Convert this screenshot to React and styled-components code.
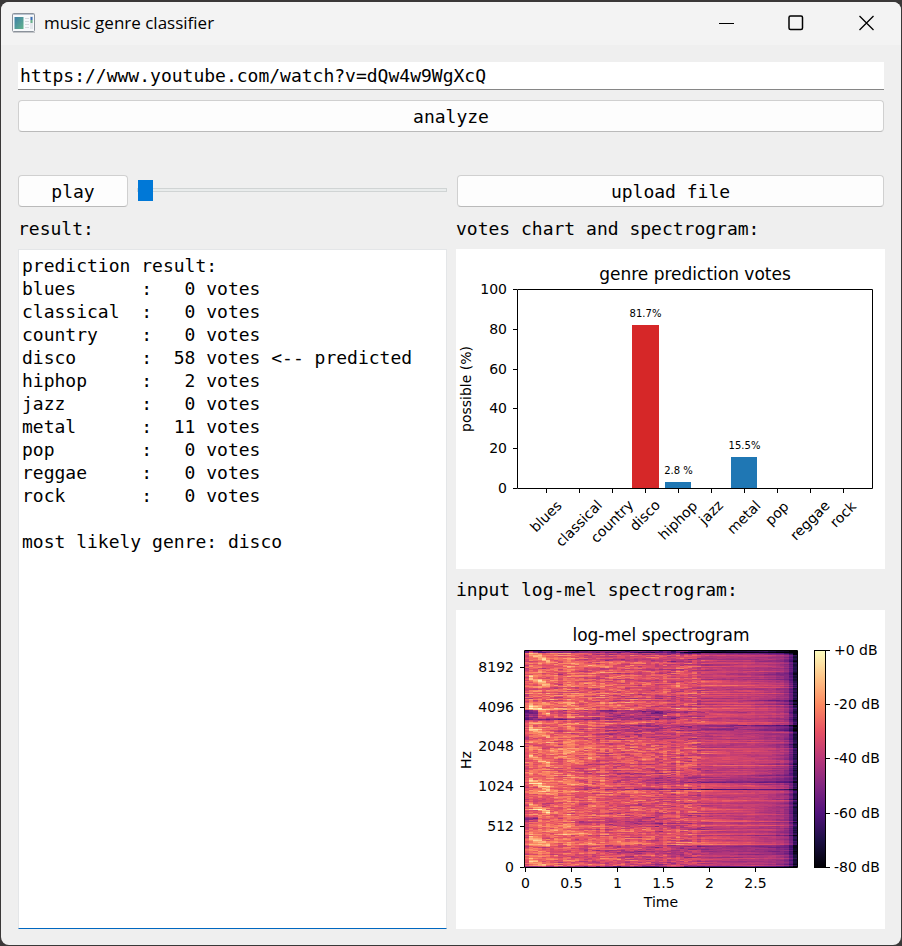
import React, { useMemo, useState } from "react";
import styled, { createGlobalStyle } from "styled-components";

const MONO = '"DejaVu Sans Mono", "Liberation Mono", monospace';
const UI = '"Open Sans", "Noto Sans", sans-serif';
const PLOT = '"DejaVu Sans", sans-serif';

const GlobalStyle = createGlobalStyle`
  *, *::before, *::after { box-sizing: border-box; }
  body { margin: 0; background: #3a3838; }
`;

const Desktop = styled.div`
  display: flex;
  min-height: 100vh;
  padding: 2px 1px 1px;
  background: #3a3838;
`;

const Window = styled.main`
  display: flex;
  flex: 1;
  flex-direction: column;
  min-width: 0;
  overflow: hidden;
  border-radius: 8px;
  background: #efefef;
  color: #000;
  font: 18px/23px ${MONO};
`;

const TitleBar = styled.header`
  display: flex;
  align-items: center;
  height: 43px;
  padding: 0 0 2px 11px;
  background: #f3f3f3;
`;

const Title = styled.h1`
  flex: 1;
  margin: 0 0 0 8px;
  font: 400 17px/24px ${UI};
`;

const CaptionButton = styled.button`
  display: grid;
  place-items: center;
  width: 70px;
  height: 41px;
  padding: 0;
  border: 0;
  background: transparent;
  &:hover { background: #e5e5e5; }
`;

const Body = styled.div`
  display: flex;
  flex: 1;
  flex-direction: column;
  padding: 17px 16px 16px 17px;
`;

const SourceForm = styled.form`
  display: flex;
  flex-direction: column;
  gap: 10px;
  margin: 0 1px 43px 0;
`;

const UrlInput = styled.input`
  height: 28px;
  padding: 0 2px;
  border: 0;
  border-bottom: 1px solid #868686;
  border-radius: 0;
  outline: 0;
  background: #fff;
  color: inherit;
  font: inherit;
`;

const PushButton = styled.button`
  flex: ${(p) => (p.$compact ? "0 0 110px" : "1 0 auto")};
  height: 32px;
  padding: 0 8px;
  border: 1px solid #d0d0d0;
  border-bottom-color: #bababa;
  border-radius: 4px;
  background: #fdfdfd;
  color: inherit;
  font: inherit;
`;

const Columns = styled.div`
  display: grid;
  flex: 1;
  grid-template-columns: repeat(2, minmax(0, 1fr));
  gap: 9px;
`;

const Column = styled.section`
  display: flex;
  flex-direction: column;
`;

const Controls = styled.div`
  display: flex;
  align-items: center;
  gap: 9px;
  padding: ${(p) => (p.$inset ? "0 1px" : "0")};
`;

const Slider = styled.input`
  flex: 1;
  min-width: 0;
  height: 22px;
  margin: 0 0 2px;
  appearance: none;
  background: transparent;
  &::-webkit-slider-runnable-track {
    height: 4px;
    border: 1px solid #d0d4d4;
    background: #e9ecec;
  }
  &::-webkit-slider-thumb {
    appearance: none;
    width: 15px;
    height: 21px;
    margin-top: -9px;
    border: 0;
    background: #0078d7;
  }
`;

const Caption = styled.label`
  display: block;
  padding: 10px 0 9px;
  line-height: 23px;
`;

const FigureCaption = styled.h2`
  margin: 0;
  padding: ${(p) => (p.$first ? "10px 0 9px" : "9px 0")};
  font: inherit;
`;

const ResultText = styled.textarea`
  flex: 1;
  padding: 4px 3px;
  border: 1px solid #e4e6e8;
  border-bottom-color: #0067c0;
  border-radius: 0;
  outline: 0;
  resize: none;
  background: #fff;
  color: inherit;
  font: inherit;
  white-space: pre;
`;

const Figure = styled.svg`
  display: block;
  width: 100%;
  height: auto;
  background: #fff;
  font-family: ${PLOT};
`;

const PlotText = styled.text`
  fill: #000;
  font-size: ${(p) => p.$size || 14}px;
  text-anchor: ${(p) => p.$anchor || "middle"};
`;

const AxisLine = styled.path`
  fill: none;
  stroke: #000;
  stroke-width: 1;
`;

const GENRES = [
  { name: "blues", votes: 0, labelY: 268 },
  { name: "classical", votes: 0, labelY: 275 },
  { name: "country", votes: 0, labelY: 273 },
  { name: "disco", votes: 58, labelY: 267, share: "81.7%", top: 76, shareY: 68 },
  { name: "hiphop", votes: 2, labelY: 272, share: "2.8 %", top: 233, shareY: 225 },
  { name: "jazz", votes: 0, labelY: 264 },
  { name: "metal", votes: 11, labelY: 269, share: "15.5%", top: 208, shareY: 200 },
  { name: "pop", votes: 0, labelY: 265 },
  { name: "reggae", votes: 0, labelY: 272 },
  { name: "rock", votes: 0, labelY: 266 },
];
const WINNER = "disco";

const RESULT = [
  "prediction result:",
  ...GENRES.map(
    (g) =>
      `${g.name.padEnd(11)}: ${String(g.votes).padStart(3)} votes` +
      (g.name === WINNER ? " <-- predicted" : "")
  ),
  "",
  `most likely genre: ${WINNER}`,
].join("\n");

const VOTE_TICKS = [
  [100, 40.5],
  [80, 80.5],
  [60, 120.5],
  [40, 159.5],
  [20, 199.5],
  [0, 239.5],
];

function VotesChart() {
  return (
    <Figure viewBox="0 0 429 320" role="img" aria-label="genre prediction votes">
      <PlotText x="239" y="31" $size={17}>genre prediction votes</PlotText>
      {VOTE_TICKS.map(([value, y]) => (
        <React.Fragment key={value}>
          <AxisLine d={`M57 ${y}H61`} />
          <PlotText x="51" y={y + 4.5} $anchor="end">{value}</PlotText>
        </React.Fragment>
      ))}
      <PlotText transform="translate(15 140) rotate(-90)">possible (%)</PlotText>
      {GENRES.map((g, i) => {
        const x = 90.5 + i * 33;
        return (
          <React.Fragment key={g.name}>
            {g.share && (
              <>
                <rect
                  x={x - 13.5}
                  y={g.top}
                  width={g.name === WINNER ? 27 : 26}
                  height={239 - g.top}
                  fill={g.name === WINNER ? "#d62728" : "#1f77b4"}
                />
                <PlotText x={x} y={g.shareY} $size={10}>{g.share}</PlotText>
              </>
            )}
            <AxisLine d={`M${x} 240V244`} />
            <PlotText transform={`translate(${x} ${g.labelY}) rotate(-45)`} y="4">
              {g.name}
            </PlotText>
          </React.Fragment>
        );
      })}
      <AxisLine d="M61.5 40.5H416.5V239.5H61.5Z" />
    </Figure>
  );
}

const MAGMA = [
  [0, 0, 4],
  [28, 16, 68],
  [81, 18, 124],
  [130, 38, 129],
  [183, 55, 121],
  [230, 81, 100],
  [252, 137, 97],
  [254, 196, 136],
  [252, 253, 191],
];

function magma(t) {
  const p = Math.max(0, Math.min(0.9999, t)) * (MAGMA.length - 1);
  const i = Math.floor(p);
  const c = MAGMA[i].map((v, k) => Math.round(v + (MAGMA[i + 1][k] - v) * (p - i)));
  return `rgb(${c.join(",")})`;
}

const FRAMES = 65;
const BINS = 217;

// Frequency bands: first row, last row, first frame, last frame, dB change.
const BANDS = [
  [0, 1, 0, 64, -22],
  [2, 3, 12, 64, -10],
  [0, 2, 34, 64, -12],
  [7, 10, 14, 64, -6],
  [21, 28, 48, 64, -4],
  [34, 34, 40, 64, 8],
  [36, 36, 52, 64, 7],
  [48, 53, 56, 64, -6],
  [57, 58, 0, 64, 5],
  [59, 68, 0, 2, -24],
  [59, 68, 3, 9, -8],
  [59, 66, 10, 38, -11],
  [59, 64, 39, 48, -6],
  [61, 62, 56, 62, 8],
  [67, 68, 3, 30, -14],
  [69, 71, 40, 64, 4],
  [73, 79, 16, 48, -9],
  [74, 74, 44, 64, -16],
  [75, 79, 48, 64, -9],
  [80, 87, 14, 44, -4],
  [109, 110, 38, 64, 6],
  [114, 114, 44, 64, 7],
  [119, 123, 6, 30, -4],
  [124, 133, 18, 62, -6],
  [130, 131, 26, 64, -7],
  [138, 138, 16, 64, -18],
  [149, 150, 46, 64, 5],
  [166, 170, 0, 2, -12],
  [166, 175, 14, 34, -7],
  [170, 170, 46, 64, 10],
  [174, 174, 42, 64, 6],
  [180, 181, 30, 64, -4],
  [184, 184, 48, 64, -7],
  [190, 193, 0, 64, 5],
  [194, 212, 6, 20, -4],
  [194, 203, 21, 64, -8],
  [204, 213, 21, 64, -5],
  [215, 216, 0, 64, -22],
];

// Falling vocal harmonics at the start of the clip, by row.
const GLIDES = [3, 28, 56, 78, 106, 131, 155, 187, 211];

const STRIPES = { 0: -7, 9: 2, 10: 4, 11: 3, 15: 2, 36: 2, 62: -3, 63: -11, 64: -24 };

function makeRandom(seed) {
  let s = seed;
  return () => {
    s = (s + 0x6d2b79f5) | 0;
    let t = Math.imul(s ^ (s >>> 15), 1 | s);
    t = (t + Math.imul(t ^ (t >>> 7), 61 | t)) ^ t;
    return ((t ^ (t >>> 14)) >>> 0) / 4294967296;
  };
}

function baseLevel(frame) {
  if (frame < 13) return -25 - frame * 0.2;
  if (frame < 43) return -29 - (frame - 13) * 0.13;
  return -35 - (frame - 43) * 0.2 - Math.max(0, frame - 54) * 0.5;
}

function addRun(paths, run, row) {
  if (!paths.has(run.level)) paths.set(run.level, []);
  const width = run.end - run.x;
  paths.get(run.level).push(`M${run.x} ${41 + row}h${width}v1h${-width}z`);
}

function buildSpectrogram() {
  const random = makeRandom(2024);
  const noise = () => random() + random() + random() - 1.5;
  const frameGain = Array.from({ length: FRAMES }, (_, f) => noise() * (f < 43 ? 2 : 0.8));
  const paths = new Map();
  for (let r = 0; r < BINS; r += 1) {
    const rowGain = noise() * 6;
    const shift = noise() * 8;
    let drift = 0;
    let run = null;
    for (let f = 0; f < FRAMES; f += 1) {
      const late = f >= 43;
      drift = drift * (late ? 0.8 : 0.5) + noise() * (late ? 2.4 : 8.5);
      const rowWeight = late ? 0.75 : 0.6;
      let db = baseLevel(f) + rowGain * rowWeight + drift + frameGain[f] + (STRIPES[f] || 0);
      BANDS.forEach(([r0, r1, f0, f1, gain]) => {
        const from = f0 > 9 ? f0 + shift : f0;
        const to = f1 > 9 && f1 < 62 ? f1 + shift : f1;
        if (r >= r0 && r <= r1 && f >= from && f <= to) {
          db += gain * (f0 > 9 ? Math.min(1, (f - from + 1) / 8) : 1);
        }
      });
      GLIDES.forEach((g) => {
        const distance = Math.abs(r - (g - 3 + f * 1.8));
        if (f > 0 && f < 6 && distance < 3) db += 14 - distance * 3;
      });
      const level = Math.max(0, Math.min(47, Math.round(((db + 80) / 80) * 47)));
      const x = 69 + Math.round((f * 272) / FRAMES);
      const end = 69 + Math.round(((f + 1) * 272) / FRAMES);
      if (run && run.level === level) {
        run.end = end;
      } else {
        if (run) addRun(paths, run, r);
        run = { level, x, end };
      }
    }
    addRun(paths, run, r);
  }
  return [...paths].map(([level, parts]) => ({ color: magma(level / 47), d: parts.join("") }));
}

const HZ_TICKS = [
  [8192, 57.5],
  [4096, 97.5],
  [2048, 136.5],
  [1024, 176.5],
  [512, 216.5],
  [0, 257.5],
];
const TIME_TICKS = [
  ["0", 69.5],
  ["0.5", 115.5],
  ["1", 161.5],
  ["1.5", 207.5],
  ["2", 253.5],
  ["2.5", 299.5],
];
const DB_TICKS = [
  ["+0 dB", 40.5],
  ["-20 dB", 94.5],
  ["-40 dB", 148.5],
  ["-60 dB", 203.5],
  ["-80 dB", 257.5],
];

function Spectrogram() {
  const layers = useMemo(buildSpectrogram, []);
  return (
    <Figure viewBox="0 0 429 319" role="img" aria-label="log-mel spectrogram">
      <defs>
        <linearGradient id="magma" x1="0" y1="1" x2="0" y2="0">
          {MAGMA.map((c, i) => (
            <stop key={i} offset={i / (MAGMA.length - 1)} stopColor={`rgb(${c.join(",")})`} />
          ))}
        </linearGradient>
      </defs>
      <PlotText x="205" y="31" $size={17}>log-mel spectrogram</PlotText>
      <g shapeRendering="crispEdges">
        {layers.map((layer) => (
          <path key={layer.color} d={layer.d} fill={layer.color} />
        ))}
      </g>
      <AxisLine d="M68.5 40.5H341.5V257.5H68.5Z" />
      {HZ_TICKS.map(([value, y]) => (
        <React.Fragment key={value}>
          <AxisLine d={`M64 ${y}H68`} />
          <PlotText x="58" y={y + 4.5} $anchor="end">{value}</PlotText>
        </React.Fragment>
      ))}
      <PlotText transform="translate(15 150) rotate(-90)">Hz</PlotText>
      {TIME_TICKS.map(([value, x]) => (
        <React.Fragment key={value}>
          <AxisLine d={`M${x} 258V262`} />
          <PlotText x={x} y="278">{value}</PlotText>
        </React.Fragment>
      ))}
      <PlotText x="205" y="297">Time</PlotText>
      <rect x="358.5" y="40.5" width="11" height="217" fill="url(#magma)" stroke="#000" />
      {DB_TICKS.map(([value, y]) => (
        <React.Fragment key={value}>
          <AxisLine d={`M370 ${y}H374`} />
          <PlotText x="378" y={y + 4.5} $anchor="start">{value}</PlotText>
        </React.Fragment>
      ))}
    </Figure>
  );
}

function AppIcon() {
  return (
    <svg width="24" height="20" viewBox="0 0 24 20" aria-hidden="true">
      <defs>
        <linearGradient id="screen" x1="0" y1="0" x2="1" y2="1">
          <stop offset="0" stopColor="#3f7fa8" />
          <stop offset="1" stopColor="#62b48c" />
        </linearGradient>
      </defs>
      <rect x="0.5" y="0.5" width="22" height="18" rx="1" fill="#f7f9fb" stroke="#8b929b" />
      <path d="M1 1.5H22" stroke="#b9c3d0" />
      <path d="M1 19.5H23" stroke="#c3c5c8" />
      <rect x="2.5" y="4" width="9" height="12" fill="url(#screen)" />
      <path d="M13 5.5h4M13 8.5h4M13 11.5h4M13 14.5h4" stroke="#d5d8dc" />
      <rect x="18" y="3" width="3" height="13" fill="#e4e8ed" />
      <path d="M19.5 4V7" stroke="#3b6fb5" strokeWidth="2" />
      <path d="M19.5 7V10" stroke="#69b08b" strokeWidth="2" />
    </svg>
  );
}

export default function App() {
  const [url, setUrl] = useState("https://www.youtube.com/watch?v=dQw4w9WgXcQ");
  const [position, setPosition] = useState(0);
  return (
    <>
      <GlobalStyle />
      <Desktop>
        <Window>
          <TitleBar>
            <AppIcon />
            <Title>music genre classifier</Title>
            <CaptionButton type="button" aria-label="Minimize">
              <svg width="16" height="16" fill="none" stroke="#000">
                <path d="M1 8.5H16" />
              </svg>
            </CaptionButton>
            <CaptionButton type="button" aria-label="Maximize">
              <svg width="16" height="16" fill="none" stroke="#000" strokeWidth="1.5">
                <rect x="1" y="1" width="13.5" height="13.5" rx="1.5" />
              </svg>
            </CaptionButton>
            <CaptionButton type="button" aria-label="Close">
              <svg width="16" height="16" fill="none" stroke="#000" strokeWidth="1.3">
                <path d="M1.5 1L15.5 15M15.5 1L1.5 15" />
              </svg>
            </CaptionButton>
          </TitleBar>
          <Body>
            <SourceForm onSubmit={(e) => e.preventDefault()}>
              <UrlInput
                aria-label="video url"
                value={url}
                spellCheck={false}
                onChange={(e) => setUrl(e.target.value)}
              />
              <PushButton type="submit">analyze</PushButton>
            </SourceForm>
            <Columns>
              <Column>
                <Controls>
                  <PushButton type="button" $compact>play</PushButton>
                  <Slider
                    type="range"
                    aria-label="playback position"
                    min="0"
                    max="100"
                    value={position}
                    onChange={(e) => setPosition(Number(e.target.value))}
                  />
                </Controls>
                <Caption htmlFor="result">result:</Caption>
                <ResultText id="result" readOnly spellCheck={false} value={RESULT} />
              </Column>
              <Column>
                <Controls $inset>
                  <PushButton type="button">upload file</PushButton>
                </Controls>
                <FigureCaption $first>votes chart and spectrogram:</FigureCaption>
                <VotesChart />
                <FigureCaption>input log-mel spectrogram:</FigureCaption>
                <Spectrogram />
              </Column>
            </Columns>
          </Body>
        </Window>
      </Desktop>
    </>
  );
}
